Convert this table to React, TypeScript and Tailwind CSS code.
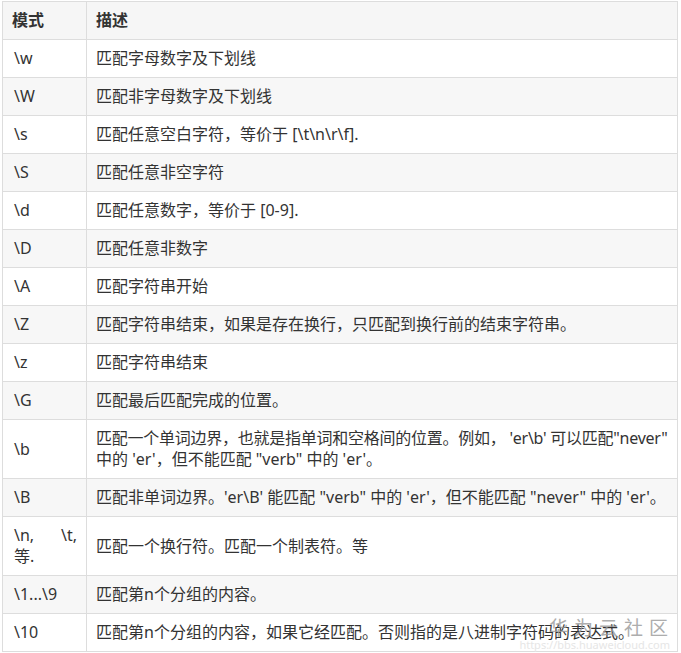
import React from 'react';

interface Row {
  pattern: React.ReactNode;
  desc: React.ReactNode;
}

const rows: Row[] = [
  { pattern: '\\w', desc: '匹配字母数字及下划线' },
  { pattern: '\\W', desc: '匹配非字母数字及下划线' },
  { pattern: '\\s', desc: '匹配任意空白字符，等价于 [\\t\\n\\r\\f].' },
  { pattern: '\\S', desc: '匹配任意非空字符' },
  { pattern: '\\d', desc: '匹配任意数字，等价于 [0-9].' },
  { pattern: '\\D', desc: '匹配任意非数字' },
  { pattern: '\\A', desc: '匹配字符串开始' },
  { pattern: '\\Z', desc: '匹配字符串结束，如果是存在换行，只匹配到换行前的结束字符串。' },
  { pattern: '\\z', desc: '匹配字符串结束' },
  { pattern: '\\G', desc: '匹配最后匹配完成的位置。' },
  {
    pattern: '\\b',
    desc: (
      <>
        <span className="whitespace-nowrap tracking-[-0.25px]">
          匹配一个单词边界，也就是指单词和空格间的位置。例如， 'er\b' 可以匹配"never"
        </span>
        <br />
        中的 'er'，但不能匹配 "verb" 中的 'er'。
      </>
    ),
  },
  { pattern: '\\B', desc: '匹配非单词边界。\'er\\B\' 能匹配 "verb" 中的 \'er\'，但不能匹配 "never" 中的 \'er\'。' },
  {
    pattern: (
      <>
        <div className="flex justify-between">
          <span>\n,</span>
          <span>\t,</span>
        </div>
        <div>等.</div>
      </>
    ),
    desc: '匹配一个换行符。匹配一个制表符。等',
  },
  { pattern: '\\1...\\9', desc: '匹配第n个分组的内容。' },
  { pattern: '\\10', desc: '匹配第n个分组的内容，如果它经匹配。否则指的是八进制字符码的表达式。' },
];

export default function App() {
  return (
    <div
      className="relative w-[681px] h-[653px] bg-white pt-px pl-[2px] text-[16px] leading-[21px] text-[#333]"
      style={{ fontFamily: '"Noto Sans", "Noto Sans CJK SC", sans-serif' }}
    >
      <table className="w-[676px] border-collapse table-fixed">
        <colgroup>
          <col className="w-[84px]" />
          <col />
        </colgroup>
        <thead>
          <tr className="bg-[#f6f6f6]">
            <th className="border border-[#ddd] h-[38px] px-[9px] py-2 text-left font-bold text-[#333]">模式</th>
            <th className="border border-[#ddd] h-[38px] px-[9px] py-2 text-left font-bold text-[#333]">描述</th>
          </tr>
        </thead>
        <tbody>
          {rows.map((r, i) => (
            <tr key={i} className={i % 2 === 1 ? 'bg-[#f7f7f7]' : 'bg-white'}>
              <td className="border border-[#ddd] h-[38px] pl-[11px] pr-[9px] py-2 align-middle">{r.pattern}</td>
              <td className="border border-[#ddd] h-[38px] pl-[9px] pr-[6px] py-2 align-middle">{r.desc}</td>
            </tr>
          ))}
        </tbody>
      </table>

      {/* watermark */}
      <div className="absolute right-[7px] bottom-[2px] flex flex-col items-end pointer-events-none">
        <div className="text-[19px] leading-[22px] tracking-[6px] text-[#999] opacity-80">华为云社区</div>
        <div className="text-[11px] leading-[12px] text-[#e6e6e6] pr-[4px]">https://bbs.huaweicloud.com</div>
      </div>
    </div>
  );
}
